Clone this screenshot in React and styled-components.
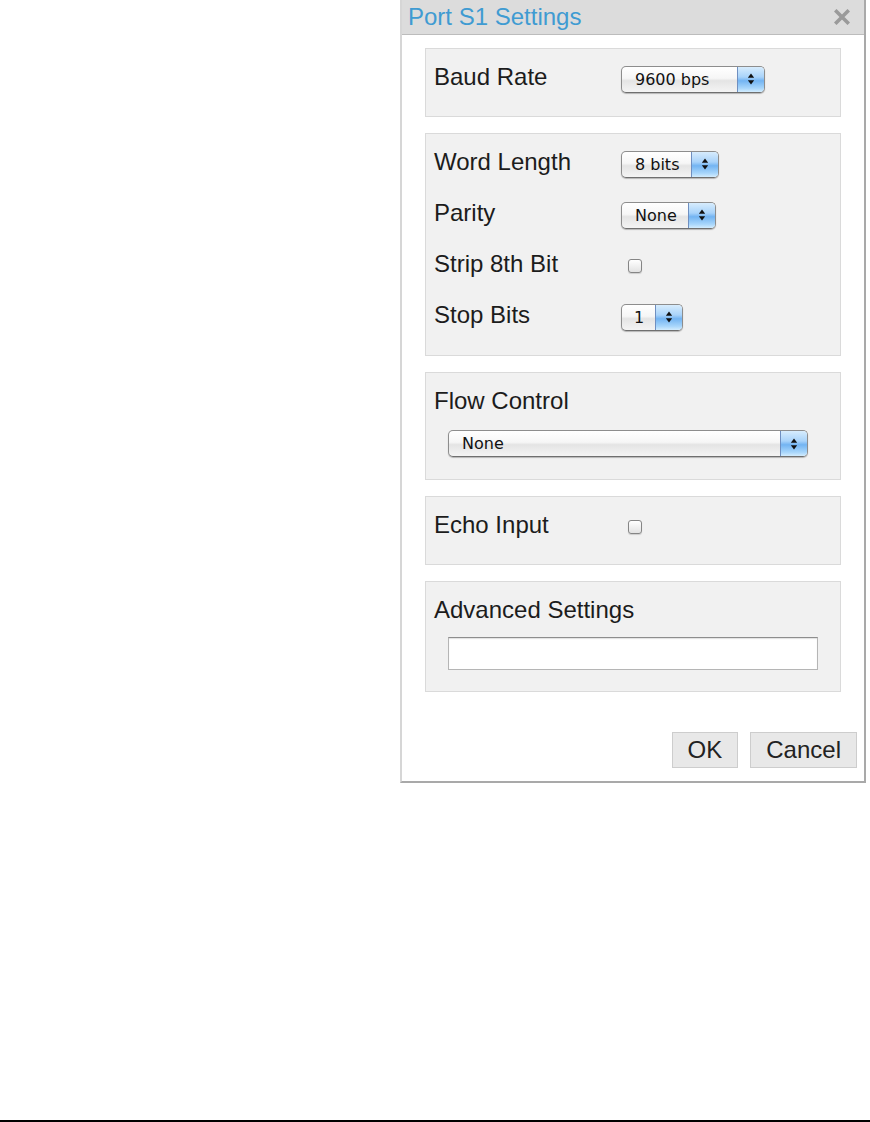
import React from "react";
import styled, { createGlobalStyle } from "styled-components";

const Global = createGlobalStyle`
  html, body { margin: 0; padding: 0; background: #fff; }
  body { font-family: "Liberation Sans", Arial, sans-serif; color: #1c1c1c; }
  * { box-sizing: border-box; }
`;

const Page = styled.div`
  display: flex;
  flex-direction: column;
  min-height: 100vh;
`;

const Stage = styled.div`
  flex: 1;
  padding-left: 400px;
`;

const BottomRule = styled.div`
  height: 2px;
  background: #000;
`;

const Dialog = styled.div`
  width: 466px;
  background: #fff;
  border-left: 2px solid #d6d6d6;
  border-right: 2px solid #a9a9a9;
  border-bottom: 2px solid #a9a9a9;
`;

const TitleBar = styled.div`
  height: 35px;
  background: #dcdcdc;
  border-bottom: 1px solid #bcbcbc;
  display: flex;
  align-items: center;
  justify-content: space-between;
  padding: 0 14px 0 6px;
`;

const Title = styled.h1`
  margin: 0;
  font-size: 24px;
  font-weight: normal;
  color: #3f9bd2;
  line-height: 1;
`;

const CloseButton = styled.button`
  border: 0;
  background: none;
  padding: 0;
  width: 16px;
  height: 16px;
  display: flex;
  cursor: pointer;
`;

const Body = styled.div`
  padding: 13px 23px 0 23px;
  display: flex;
  flex-direction: column;
  gap: 16px;
`;

const Section = styled.div`
  background: #f1f1f1;
  border: 1px solid #dadada;
  padding: 14px 8px ${(p) => p.$bottom || 24}px;
  display: flex;
  flex-direction: column;
  gap: ${(p) => p.$gap || 0}px;
`;

const Row = styled.div`
  display: flex;
  align-items: center;
  height: 28px;
`;

const Label = styled.span`
  font-size: 24px;
  color: #1c1c1c;
  width: ${(p) => (p.$wide ? "auto" : "187px")};
  flex: none;
`;

const Indented = styled.div`
  margin-left: 14px;
  margin-top: ${(p) => p.$top || 0}px;
`;

const Popup = styled.div`
  width: ${(p) => p.$w}px;
  height: 27px;
  margin-top: ${(p) => (p.$inline ? 4 : 0)}px;
  display: flex;
  align-items: stretch;
  border: 1px solid #8d8d8d;
  border-bottom-color: #6f6f6f;
  border-radius: 5px;
  background: linear-gradient(#ffffff 0%, #f6f6f6 45%, #e4e4e4 55%, #f4f4f4 100%);
  box-shadow: 0 1px 1px rgba(0, 0, 0, 0.25);
  overflow: hidden;
  font-family: "DejaVu Sans", sans-serif;
`;

const PopupValue = styled.span`
  flex: 1;
  display: flex;
  align-items: center;
  padding-left: ${(p) => p.$pad || 13}px;
  font-size: 16px;
  color: #111;
  white-space: nowrap;
`;

const Stepper = styled.span`
  width: 27px;
  flex: none;
  display: flex;
  align-items: center;
  justify-content: center;
  border-left: 1px solid #6f8fc0;
  background: linear-gradient(#d7ecfd 0%, #a9d3fa 40%, #73b4f2 55%, #a8d6fb 85%, #d3ecfd 100%);
`;

const Checkbox = styled.span`
  display: inline-block;
  width: 14px;
  height: 14px;
  margin: 4px 0 0 7px;
  border: 1px solid #858585;
  border-radius: 3px;
  background: linear-gradient(#ffffff, #e2e2e2);
  box-shadow: 0 1px 1px rgba(0, 0, 0, 0.15);
`;

const TextField = styled.input`
  display: block;
  width: 370px;
  height: 33px;
  border: 1px solid #b5b5b5;
  border-top-color: #8e8e8e;
  background: #fff;
  box-shadow: inset 0 1px 1px rgba(0, 0, 0, 0.12);
  outline: none;
  font-size: 16px;
  padding: 0 6px;
`;

const Footer = styled.div`
  display: flex;
  justify-content: flex-end;
  gap: 12px;
  padding: 40px 7px 13px;
`;

const Button = styled.button`
  height: 36px;
  padding: 0 15px;
  background: #e8e8e8;
  border: 1px solid #cdcdcd;
  font-family: "Liberation Sans", Arial, sans-serif;
  font-size: 24px;
  color: #222;
  cursor: pointer;
`;

const Arrows = () => (
  <svg width="8" height="12" viewBox="0 0 8 12">
    <path d="M4 0.5 L7.2 4.8 L0.8 4.8 Z" fill="#111" />
    <path d="M4 11.5 L7.2 7.2 L0.8 7.2 Z" fill="#111" />
  </svg>
);

const Select = ({ width, value, pad, inline }) => (
  <Popup $w={width} $inline={inline}>
    <PopupValue $pad={pad}>{value}</PopupValue>
    <Stepper>
      <Arrows />
    </Stepper>
  </Popup>
);

const CloseIcon = () => (
  <svg width="16" height="16" viewBox="0 0 16 16">
    <path d="M2.5 2.5 L13.5 13.5 M13.5 2.5 L2.5 13.5" stroke="#9a9a9a" strokeWidth="3.6" strokeLinecap="square" />
  </svg>
);

export default function App() {
  return (
    <Page>
      <Global />
      <Stage>
        <Dialog>
          <TitleBar>
            <Title>Port S1 Settings</Title>
            <CloseButton aria-label="Close">
              <CloseIcon />
            </CloseButton>
          </TitleBar>
          <Body>
            <Section $bottom={25}>
              <Row>
                <Label>Baud Rate</Label>
                <Select inline width={144} value="9600 bps" />
              </Row>
            </Section>
            <Section $gap={23} $bottom={26}>
              <Row>
                <Label>Word Length</Label>
                <Select inline width={98} value="8 bits" />
              </Row>
              <Row>
                <Label>Parity</Label>
                <Select inline width={95} value="None" />
              </Row>
              <Row>
                <Label>Strip 8th Bit</Label>
                <Checkbox />
              </Row>
              <Row>
                <Label>Stop Bits</Label>
                <Select inline width={62} value="1" pad={12} />
              </Row>
            </Section>
            <Section $bottom={22}>
              <Row>
                <Label $wide>Flow Control</Label>
              </Row>
              <Indented $top={15}>
                <Select width={360} value="None" />
              </Indented>
            </Section>
            <Section $bottom={25}>
              <Row>
                <Label>Echo Input</Label>
                <Checkbox />
              </Row>
            </Section>
            <Section $bottom={21}>
              <Row>
                <Label $wide>Advanced Settings</Label>
              </Row>
              <Indented $top={13}>
                <TextField type="text" defaultValue="" />
              </Indented>
            </Section>
          </Body>
          <Footer>
            <Button>OK</Button>
            <Button>Cancel</Button>
          </Footer>
        </Dialog>
      </Stage>
      <BottomRule />
    </Page>
  );
}
